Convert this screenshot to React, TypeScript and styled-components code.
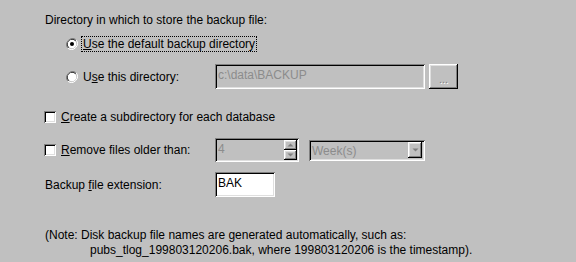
import styled, { createGlobalStyle } from "styled-components";

const GlobalStyle = createGlobalStyle`
  html, body {
    margin: 0;
    background: #c0c0c0;
  }
  body {
    font-family: "Liberation Sans", Arial, sans-serif;
    font-size: 12px;
    color: #000;
  }
`;

const Page = styled.div`
  width: 576px;
  height: 262px;
  box-sizing: border-box;
  padding: 13px 0 0 44px;
  display: flex;
  flex-direction: column;
  background: #c0c0c0;
`;

const Heading = styled.div`
  line-height: 14px;
  padding-left: 1px;
`;

const Row = styled.div<{ $h: number; $mt: number }>`
  display: grid;
  grid-template-columns: 171px max-content;
  align-items: center;
  height: ${(p) => p.$h}px;
  margin-top: ${(p) => p.$mt}px;
`;

const Choice = styled.label<{ $indent: number; $gap: number }>`
  display: flex;
  align-items: center;
  gap: ${(p) => p.$gap}px;
  padding-left: ${(p) => p.$indent}px;
  line-height: 14px;
  white-space: nowrap;
`;

const PlainLabel = styled.span`
  padding-left: 1px;
  line-height: 14px;
  white-space: nowrap;
`;

const Focus = styled.span<{ $focused?: boolean }>`
  padding: 0 1px;
  border: 1px ${(p) => (p.$focused ? "dotted #000" : "solid transparent")};
`;

const Controls = styled.div<{ $gap: number }>`
  display: flex;
  align-items: center;
  gap: ${(p) => p.$gap}px;
`;

const sunken = `
  box-shadow: inset 1px 1px #808080, inset -1px -1px #ffffff,
    inset 2px 2px #000000, inset -2px -2px #dfdfdf;
`;

const raised = `
  box-shadow: inset -1px -1px #000000, inset 1px 1px #ffffff,
    inset -2px -2px #808080, inset 2px 2px #dfdfdf;
`;

const Field = styled.div<{ $w: number; $h: number; $disabled?: boolean }>`
  ${sunken}
  width: ${(p) => p.$w}px;
  height: ${(p) => p.$h}px;
  box-sizing: border-box;
  padding: 4px 4px 0 3px;
  display: flex;
  align-items: flex-start;
  gap: 0;
  background: ${(p) => (p.$disabled ? "#c0c0c0" : "#ffffff")};
  color: ${(p) => (p.$disabled ? "#8c8c8c" : "#000")};
  line-height: 14px;
`;

const FieldText = styled.span`
  flex: 1;
  white-space: nowrap;
`;

const Button = styled.div<{ $w: number; $h: number }>`
  ${raised}
  width: ${(p) => p.$w}px;
  height: ${(p) => p.$h}px;
  box-sizing: border-box;
  display: flex;
  align-items: flex-end;
  justify-content: center;
  padding-bottom: 6px;
  color: #808080;
  text-shadow: 1px 1px #ffffff;
  font-size: 11px;
  line-height: 8px;
  letter-spacing: 0;
`;

const SpinStack = styled.div`
  display: flex;
  flex-direction: column;
  margin: -2px -2px 0 0;
`;

const SpinButton = styled.div`
  ${raised}
  width: 13px;
  height: 10px;
  display: flex;
  align-items: center;
  justify-content: center;
`;

const DropButton = styled.div`
  ${raised}
  width: 14px;
  height: 16px;
  margin: -2px -1px 0 0;
  display: flex;
  align-items: center;
  justify-content: center;
`;

const Box = styled.span`
  ${sunken}
  width: 12px;
  height: 12px;
  background: #ffffff;
  flex: none;
`;

const Note = styled.div`
  margin-top: 31px;
  padding-left: 1px;
  line-height: 15px;
`;

const NoteLine = styled.div<{ $indent: number }>`
  padding-left: ${(p) => p.$indent}px;
  white-space: nowrap;
`;

const Key = styled.u`
  text-decoration-thickness: 1px;
  text-underline-offset: 1px;
`;

function Radio({ checked }: { checked?: boolean }) {
  return (
    <svg width="12" height="12" viewBox="0 0 12 12" style={{ flex: "none" }}>
      <path d="M10.2 1.8A6 6 0 0 0 1.8 10.2" fill="none" stroke="#808080" strokeWidth="1" />
      <path d="M9.5 2.5A5 5 0 0 0 2.5 9.5" fill="none" stroke="#000" strokeWidth="1" />
      <path d="M1.8 10.2A6 6 0 0 0 10.2 1.8" fill="none" stroke="#fff" strokeWidth="1" />
      <circle cx="6" cy="6" r="4.3" fill="#fff" />
      {checked && <circle cx="6" cy="6" r="2" fill="#000" />}
    </svg>
  );
}

function Arrow({ up }: { up?: boolean }) {
  return (
    <svg width="7" height="4" viewBox="0 0 7 4">
      <path
        d={up ? "M3.5 0.5L6.5 3.5H0.5Z" : "M0.5 0.5H6.5L3.5 3.5Z"}
        fill="#808080"
      />
    </svg>
  );
}

export default function App() {
  return (
    <>
      <GlobalStyle />
      <Page>
        <Heading>Directory in which to store the backup file:</Heading>

        <Row $h={18} $mt={8}>
          <Choice $indent={22} $gap={3}>
            <Radio checked />
            <Focus $focused>
              <Key>U</Key>se the default backup directory
            </Focus>
          </Choice>
        </Row>

        <Row $h={25} $mt={11}>
          <Choice $indent={22} $gap={3}>
            <Radio />
            <Focus>
              U<Key>s</Key>e this directory:
            </Focus>
          </Choice>
          <Controls $gap={4}>
            <Field $w={210} $h={25} $disabled>
              <FieldText>c:\data\BACKUP</FieldText>
            </Field>
            <Button $w={29} $h={25}>...</Button>
          </Controls>
        </Row>

        <Row $h={18} $mt={19}>
          <Choice $indent={0} $gap={5}>
            <Box />
            <span>
              <Key>C</Key>reate a subdirectory for each database
            </span>
          </Choice>
        </Row>

        <Row $h={24} $mt={12}>
          <Choice $indent={0} $gap={5}>
            <Box />
            <span>
              <Key>R</Key>emove files older than:
            </span>
          </Choice>
          <Controls $gap={10}>
            <Field $w={84} $h={24} $disabled>
              <FieldText>4</FieldText>
              <SpinStack>
                <SpinButton>
                  <Arrow up />
                </SpinButton>
                <SpinButton>
                  <Arrow />
                </SpinButton>
              </SpinStack>
            </Field>
            <Field $w={116} $h={21} $disabled>
              <FieldText>Week(s)</FieldText>
              <DropButton>
                <Arrow />
              </DropButton>
            </Field>
          </Controls>
        </Row>

        <Row $h={25} $mt={10}>
          <PlainLabel>
            Backup <Key>f</Key>ile extension:
          </PlainLabel>
          <Controls $gap={0}>
            <Field $w={60} $h={25}>
              <FieldText>BAK</FieldText>
            </Field>
          </Controls>
        </Row>

        <Note>
          <NoteLine $indent={0}>
            (Note: Disk backup file names are generated automatically, such as:
          </NoteLine>
          <NoteLine $indent={45}>
            pubs_tlog_199803120206.bak, where 199803120206 is the timestamp).
          </NoteLine>
        </Note>
      </Page>
    </>
  );
}
